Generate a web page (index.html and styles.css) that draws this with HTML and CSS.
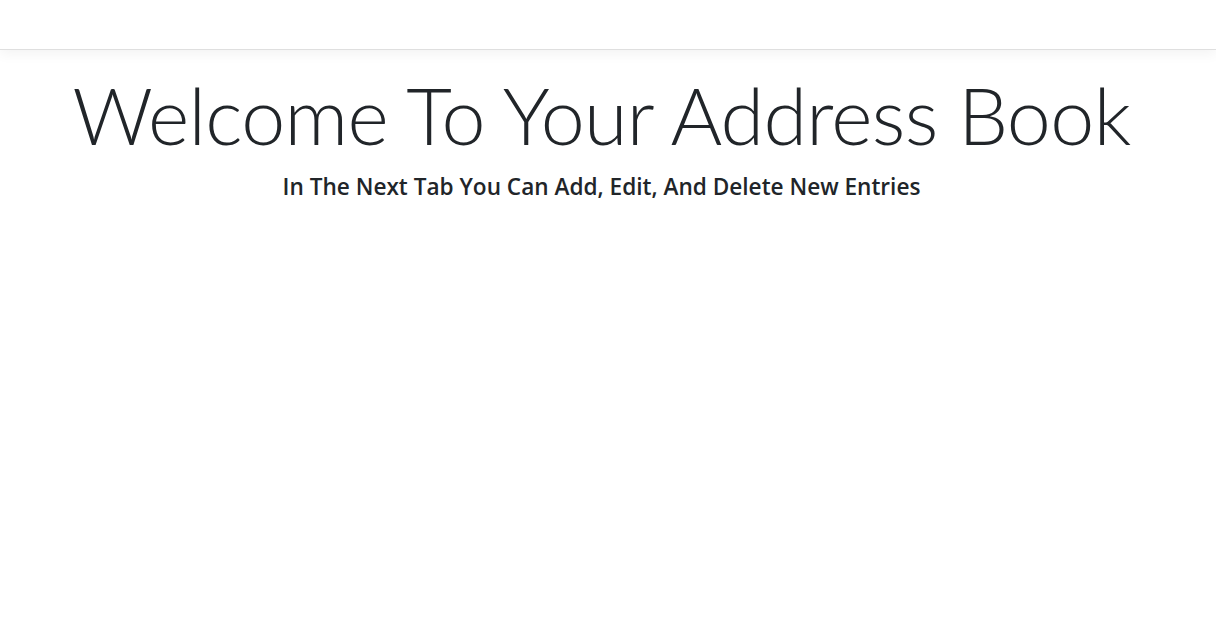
FILE: index.html
```html
<!DOCTYPE html>
<html lang="en">
<head>
<meta charset="utf-8">
<title>Address Book</title>
<link rel="stylesheet" href="styles.css">
</head>
<body>
<header class="navbar"></header>
<main class="main">
  <div class="hero">
    <h1 class="display">Welcome To Your Address Book</h1>
    <h4 class="lead">In The Next Tab You Can Add, Edit, And Delete New Entries</h4>
  </div>
</main>
</body>
</html>
```
FILE: styles.css
```css
html, body {
  margin: 0;
  padding: 0;
  background: #fff;
  color: #212529;
  font-family: "Open Sans", "Noto Sans", sans-serif;
}
.navbar {
  height: 49px;
  background: #fff;
  border-bottom: 1px solid #dfdfdf;
  box-shadow: 0 4px 12px rgba(0, 0, 0, 0.05);
}
.main {
  padding: 0 13px 0 0;
}
.hero {
  display: flex;
  flex-direction: column;
  align-items: center;
  text-align: center;
}
.display {
  margin: 18px 0 10px;
  font-family: "Lato", "Open Sans", sans-serif;
  font-size: 79px;
  font-weight: 300;
  letter-spacing: -0.7px;
  line-height: 1.2;
  color: #212529;
}
.lead {
  margin: 0;
  font-family: "Open Sans", "Noto Sans", sans-serif;
  font-size: 22.6px;
  font-weight: 600;
  line-height: 1.2;
  color: #212529;
}
```
